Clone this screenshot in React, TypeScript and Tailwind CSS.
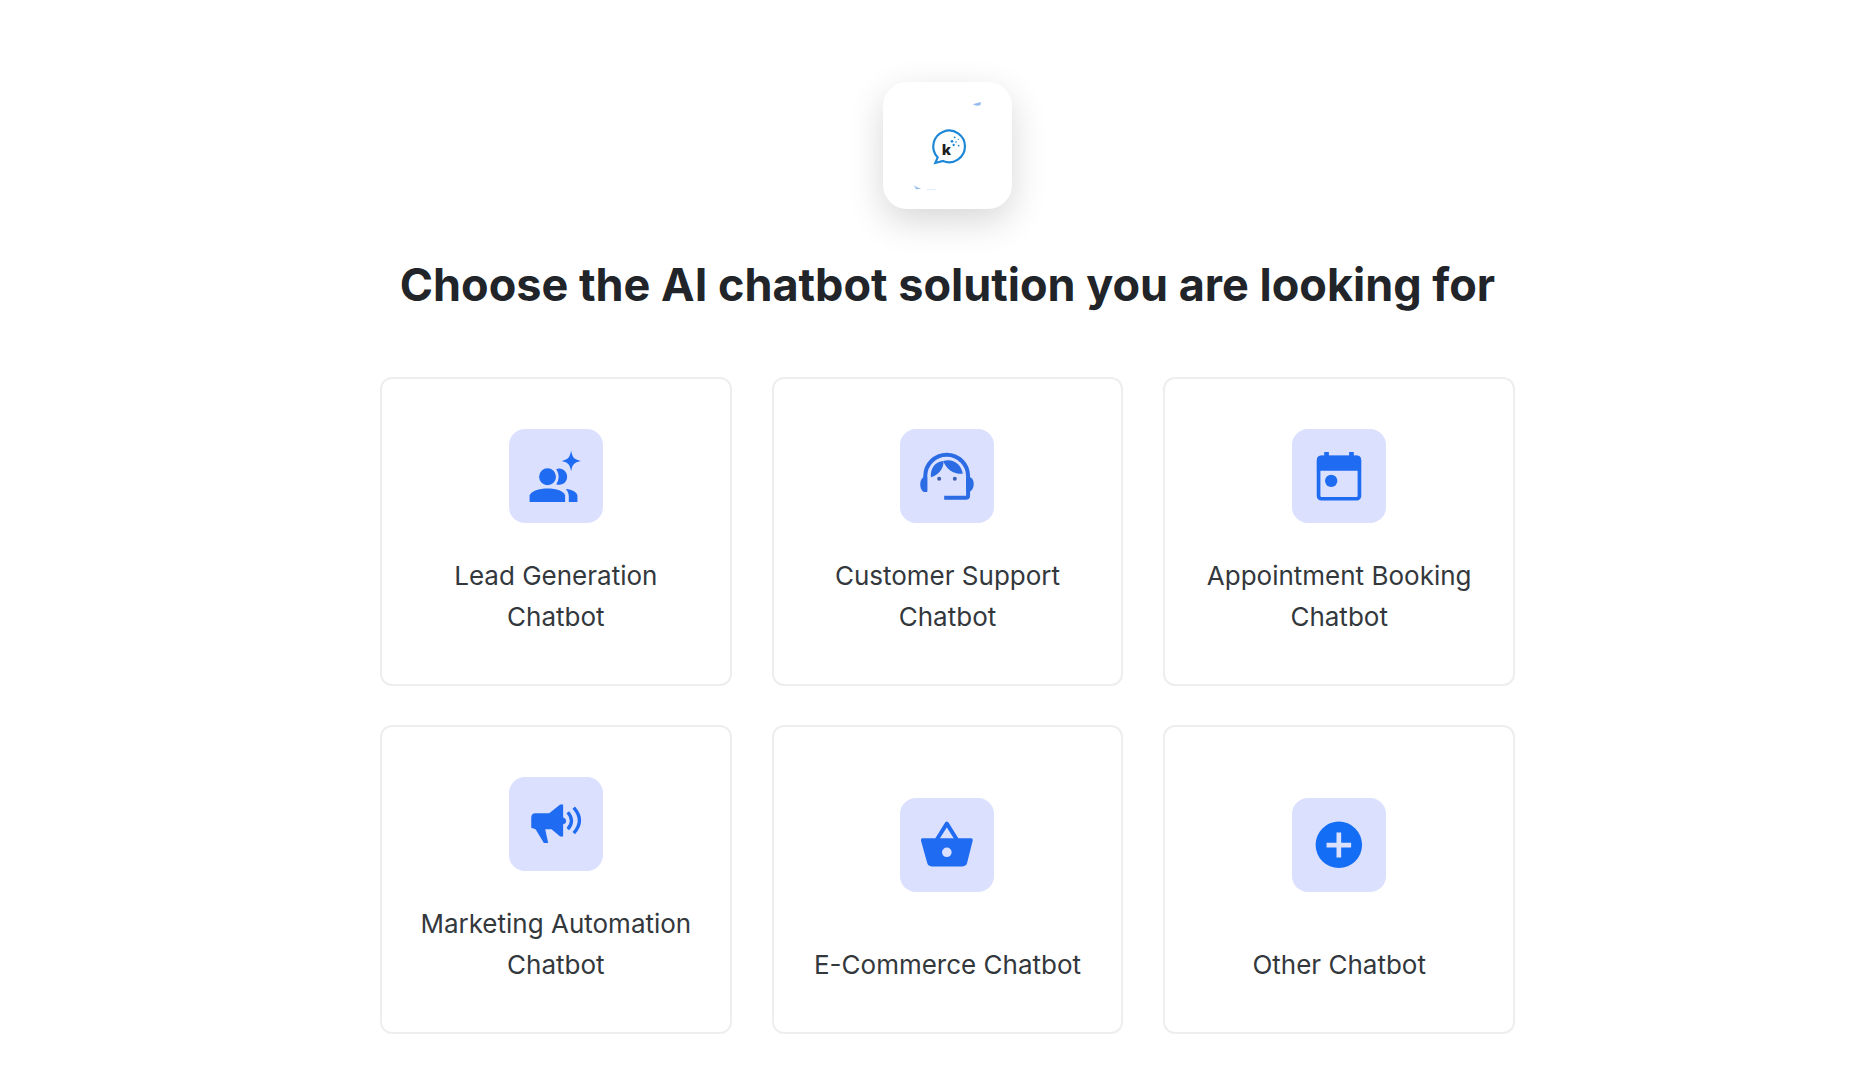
import type { ReactNode } from "react";

function Logo() {
  return (
    <svg viewBox="69 64 387 381" className="h-full w-full" role="img" aria-label="k chat logo">
      <path
        d="M233 290 A47.500 47.500 0 1 1 249 301 L226 307 Z"
        fill="none"
        stroke="#1b87d6"
        strokeWidth="6.500"
        strokeLinejoin="miter"
      />
      <text x="245" y="282" fontFamily="Open Sans, sans-serif" fontWeight="800" fontSize="42" fill="#1f1f1f">
        k
      </text>
      <g fill="#1b87d6">
        <circle cx="276" cy="242" r="4" />
        <circle cx="281" cy="253" r="3.500" />
        <circle cx="284" cy="230" r="2.800" />
        <circle cx="288" cy="244" r="2.500" />
        <circle cx="295" cy="236" r="2" />
        <circle cx="296" cy="255" r="2.500" />
      </g>
      <path d="M338 131 L363 124 L361 134 L350 135 Z" fill="#78a9e8" opacity="0.8" />
      <path d="M161 374 L171 380 L184 384 L169 386 Z" fill="#78a9e8" opacity="0.8" />
      <path d="M200 387 L228 387" stroke="#cfe2fa" strokeWidth="2" />
    </svg>
  );
}

const blue = "#1f6bf2";

const leadIcon = (
  <svg viewBox="57 52 283 283" className="h-full w-full" fill={blue} aria-hidden="true">
    <circle cx="173" cy="196" r="25.500" />
    <path d="M199 173 C216 166 232 179 232 196 C232 213 216 225 199 218 C209 205 209 187 199 173 Z" />
    <path d="M119 272 V252 C124 238 148 231 173 231 C200 231 222 238 226 252 V272 Z" />
    <path d="M228 233 C248 235 262 242 263 254 V272 H237 V254 C237 246 233 239 228 233 Z" />
    <path d="M244 117 C248 138 252 143 273 148 C252 153 248 158 244 179 C240 158 236 153 216 148 C236 143 240 138 244 117 Z" />
  </svg>
);

const supportIcon = (
  <svg viewBox="62 52 283 283" className="h-full w-full" fill="#2b6be4" aria-hidden="true">
    <path
      d="M138 238 V194 A64 64 0 0 1 267 194 V253 Q267 259 260 259 H195"
      fill="none"
      stroke="#2b6be4"
      strokeWidth="12"
    />
    <path d="M144 196 H137 C128 198 123 206 123 218 C123 232 129 241 137 242 H144 Z" />
    <path d="M261 197 H273 C280 200 284 207 284 217 C284 228 280 236 273 240 H261 Z" />
    <path d="M155 197 C152 171 168 149 193 148 C194 170 179 190 155 197 Z" />
    <path d="M192 148 C221 139 247 158 251 187 C222 188 201 172 192 148 Z" />
    <circle cx="180" cy="202" r="6" fill="#3e60b0" />
    <circle cx="227" cy="202" r="6" fill="#3e60b0" />
  </svg>
);

const calendarIcon = (
  <svg viewBox="67 52 283 283" className="h-full w-full" fill={blue} aria-hidden="true">
    <rect x="147" y="138" width="123" height="124" rx="8" fill="none" stroke={blue} strokeWidth="11" />
    <path d="M142 178 V146 Q142 132 156 132 H164 V121 H178 V132 H239 V121 H253 V132 H262 Q275 132 275 146 V178 Z" />
    <circle cx="185" cy="208" r="18.500" />
  </svg>
);

const marketingIcon = (
  <svg viewBox="57 49 283 283" className="h-full w-full" fill={blue} aria-hidden="true">
    <path d="M124 202 V171 Q124 158 137 158 H178 L211 132 H220 V171 Q229 174 229 182 Q229 189 220 191 V228 H211 L185 206 H166 L175 248 H162 L137 206 Z" />
    <g fill="none" stroke={blue} strokeWidth="10">
      <path d="M234 155 Q256 181 234 206" />
      <path d="M252 141 Q286 180 252 218" />
    </g>
  </svg>
);

const basketIcon = (
  <svg viewBox="62 48 283 283" className="h-full w-full" fill={blue} aria-hidden="true">
    <path d="M173 173 L203 125 L233 173" fill="none" stroke={blue} strokeWidth="12" strokeLinejoin="round" />
    <path
      fillRule="evenodd"
      d="M130 169 H276 Q282 169 281 176 L264 244 Q261 254 250 254 H157 Q147 254 144 244 L125 176 Q124 169 130 169 Z M203 197 A14.500 14.500 0 1 0 203 226 A14.500 14.500 0 1 0 203 197 Z"
    />
  </svg>
);

const plusIcon = (
  <svg viewBox="67 48 283 283" className="h-full w-full" aria-hidden="true">
    <circle cx="208" cy="189" r="70" fill="#146ef5" />
    <path d="M208 152 V227 M171 190 H245" fill="none" stroke="#dbe0fe" strokeWidth="14" />
  </svg>
);

const solutions: { lines: string[]; icon: ReactNode }[] = [
  { lines: ["Lead Generation", "Chatbot"], icon: leadIcon },
  { lines: ["Customer Support", "Chatbot"], icon: supportIcon },
  { lines: ["Appointment Booking", "Chatbot"], icon: calendarIcon },
  { lines: ["Marketing Automation", "Chatbot"], icon: marketingIcon },
  { lines: ["E-Commerce Chatbot"], icon: basketIcon },
  { lines: ["Other Chatbot"], icon: plusIcon },
];

function SolutionCard({ lines, icon }: { lines: string[]; icon: ReactNode }) {
  return (
    <button
      type="button"
      className="flex min-h-[309px] cursor-pointer flex-col items-center justify-end rounded-xl border-2 border-[#eeeeee] bg-white px-2 pb-[47px]"
    >
      <span className="block size-[94px] rounded-2xl bg-[#dbe0fe]">{icon}</span>
      <span
        className={
          lines.length > 1
            ? "mt-8 text-[26px] leading-[41px] text-[#33383d]"
            : "mt-[52px] text-[26px] leading-[41px] text-[#33383d]"
        }
      >
        {lines.map((line) => (
          <span key={line} className="block">
            {line}
          </span>
        ))}
      </span>
    </button>
  );
}

export default function App() {
  return (
    <main className="flex min-h-screen flex-col items-center bg-white pt-[82px] pb-[46px] pl-[29px] font-['Inter',sans-serif]">
      <div className="h-[127px] w-[129px] rounded-3xl bg-white shadow-[0_12px_36px_rgba(0,0,0,0.16)]">
        <Logo />
      </div>
      <h1 className="mt-[46px] text-center text-[45px] leading-[60px] font-bold text-[#212529]">
        Choose the AI chatbot solution you are looking for
      </h1>
      <div className="mt-[62px] grid w-full max-w-[1135px] grid-cols-3 gap-x-10 gap-y-[39px]">
        {solutions.map((s) => (
          <SolutionCard key={s.lines[0]} lines={s.lines} icon={s.icon} />
        ))}
      </div>
    </main>
  );
}
